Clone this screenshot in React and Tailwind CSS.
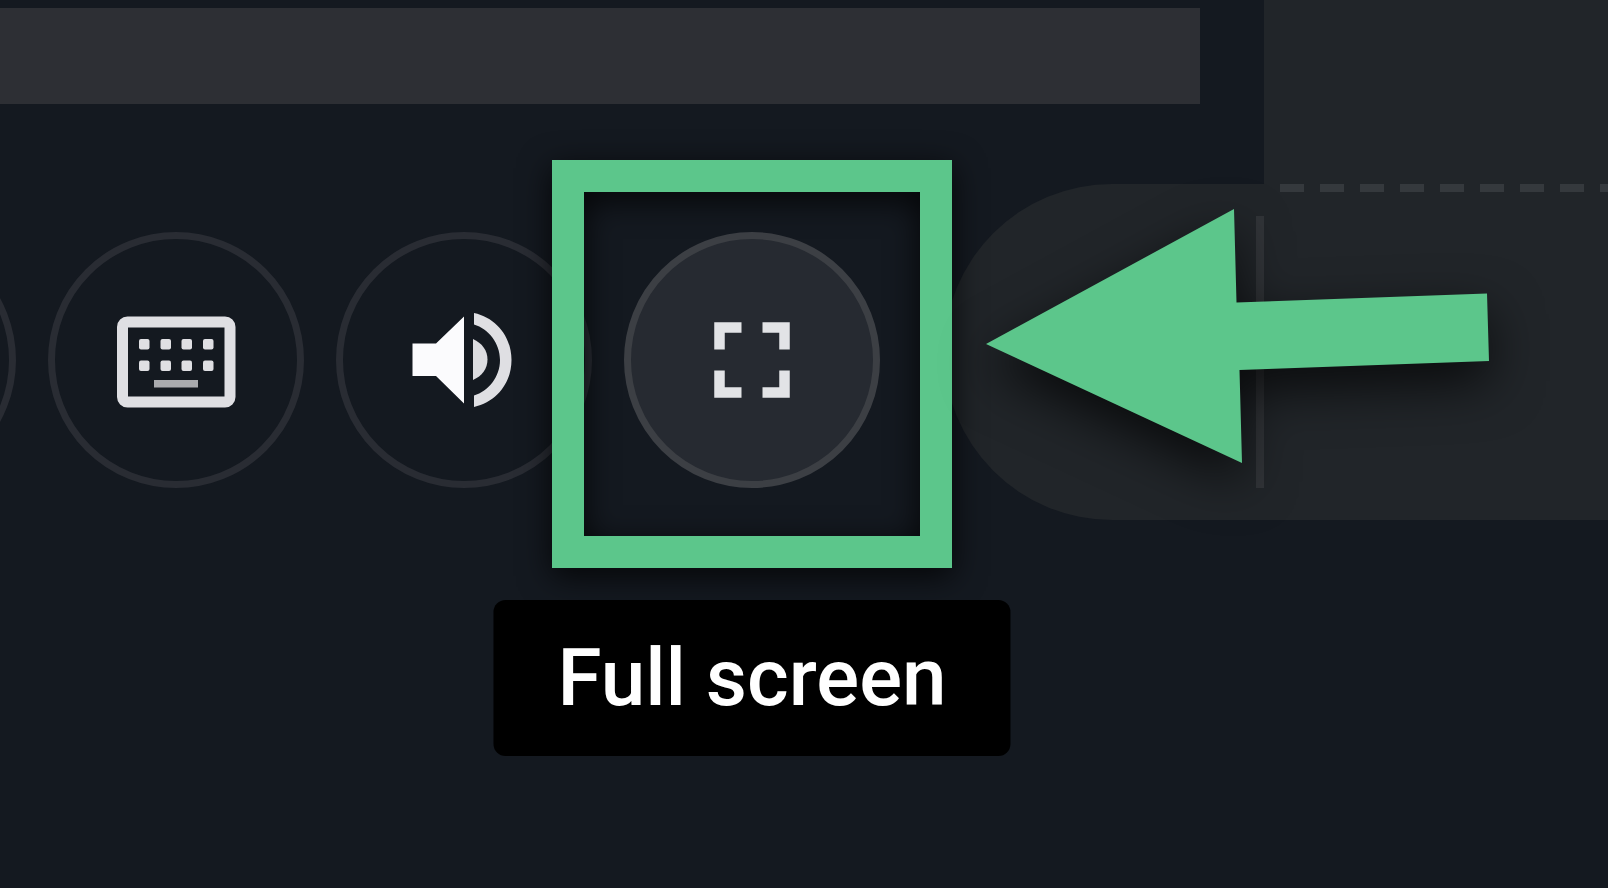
const KEY_COLUMNS = [27, 48.5, 69.5, 91];

function KeyboardIcon() {
  return (
    <svg viewBox="0 0 128 128" className="size-32" aria-hidden="true">
      <rect x="10.5" y="26" width="107.5" height="80" rx="5" fill="none" stroke="#dfdfe3" strokeWidth="11" />
      <g fill="#dfdfe3">
        {KEY_COLUMNS.map((x) => (
          <g key={x}>
            <rect x={x} y="43" width="10.5" height="10.5" rx="2" />
            <rect x={x} y="64.5" width="10.5" height="10.5" rx="2" />
          </g>
        ))}
      </g>
      <rect x="42" y="84" width="44" height="7.5" fill="#a9aaae" />
    </svg>
  );
}

function SpeakerIcon() {
  return (
    <svg viewBox="0 0 128 128" className="size-32" aria-hidden="true">
      <path d="M12.500 47.500H36L64 20.500V107.500L36 80H12.500Z" fill="#fbfbfd" />
      <path d="M73 43C82 47 87.500 54.500 87.500 63.500S82 80 73 84Z" fill="#dcdce0" />
      <path
        d="M74 17C96.500 22 111.500 41 111.500 64S96.500 106 74 111V99.500C88.500 95 100 81 100 64S88.500 33 74 28.500Z"
        fill="#dfdfe3"
      />
    </svg>
  );
}

function FullScreenIcon() {
  return (
    <svg viewBox="0 0 128 128" className="size-32" aria-hidden="true">
      <path
        d="M31.500 53.500V31.500H53.500M74.500 31.500H96.500V53.500M96.500 74.500V96.500H74.500M53.500 96.500H31.500V74.500"
        fill="none"
        stroke="#e2e3e6"
        strokeWidth="10.5"
      />
    </svg>
  );
}

function RoundButton({ label, active, children }) {
  const tone = active ? "border-[#3c3f44] bg-[#262a31]" : "border-[#292c33]";
  return (
    <button
      type="button"
      aria-label={label}
      className={`flex size-64 shrink-0 items-center justify-center rounded-full border-7 ${tone}`}
    >
      {children}
    </button>
  );
}

function Arrow() {
  return (
    <svg
      viewBox="0 0 506 256"
      className="absolute top-6 left-10 h-64 w-[506px] overflow-visible drop-shadow-[0_20px_26px_rgba(0,0,0,0.7)]"
      aria-hidden="true"
    >
      <path d="M2 136L250 1L252.500 94.500L503 85.500L505 153L255.500 162L258 255Z" fill="#5cc68b" />
    </svg>
  );
}

export default function App() {
  return (
    <main className="min-h-screen overflow-hidden bg-[#141920] font-[Roboto,sans-serif]">
      <div className="flex h-46">
        <div className="min-w-0 flex-1 pt-2 pr-16">
          <div className="h-24 bg-[#2d2f34]" />
        </div>
        <aside className="w-[344px] shrink-0 bg-[#212529]" />
      </div>

      <div className="flex h-84">
        <nav aria-label="Controls" className="relative z-10 -ml-60 flex shrink-0 gap-8 pt-12">
          <RoundButton label="More" />
          <RoundButton label="Keyboard">
            <KeyboardIcon />
          </RoundButton>
          <RoundButton label="Sound">
            <SpeakerIcon />
          </RoundButton>
          <div className="relative h-64">
            <RoundButton label="Full screen" active>
              <FullScreenIcon />
            </RoundButton>
            <div className="pointer-events-none absolute -top-18 -left-18 h-102 w-100 border-32 border-[#5cc68b] drop-shadow-[0_8px_16px_rgba(0,0,0,0.8)]" />
            <div
              role="tooltip"
              className="absolute top-92 left-1/2 -translate-x-1/2 rounded-xl bg-black px-16 py-8 text-[80px] leading-[92px] font-medium whitespace-nowrap text-white"
            >
              Full screen
            </div>
          </div>
        </nav>

        <section className="relative ml-16 flex min-w-0 flex-1 rounded-l-full bg-[#212529] pl-[312px]">
          <div className="my-8 w-2 shrink-0 bg-[#313438]" />
          <div className="ml-4 h-2 flex-1 bg-[repeating-linear-gradient(90deg,#35393d_0_24px,transparent_24px_40px)]" />
          <div className="absolute inset-y-0 left-0 z-20">
            <Arrow />
          </div>
        </section>
      </div>
    </main>
  );
}
